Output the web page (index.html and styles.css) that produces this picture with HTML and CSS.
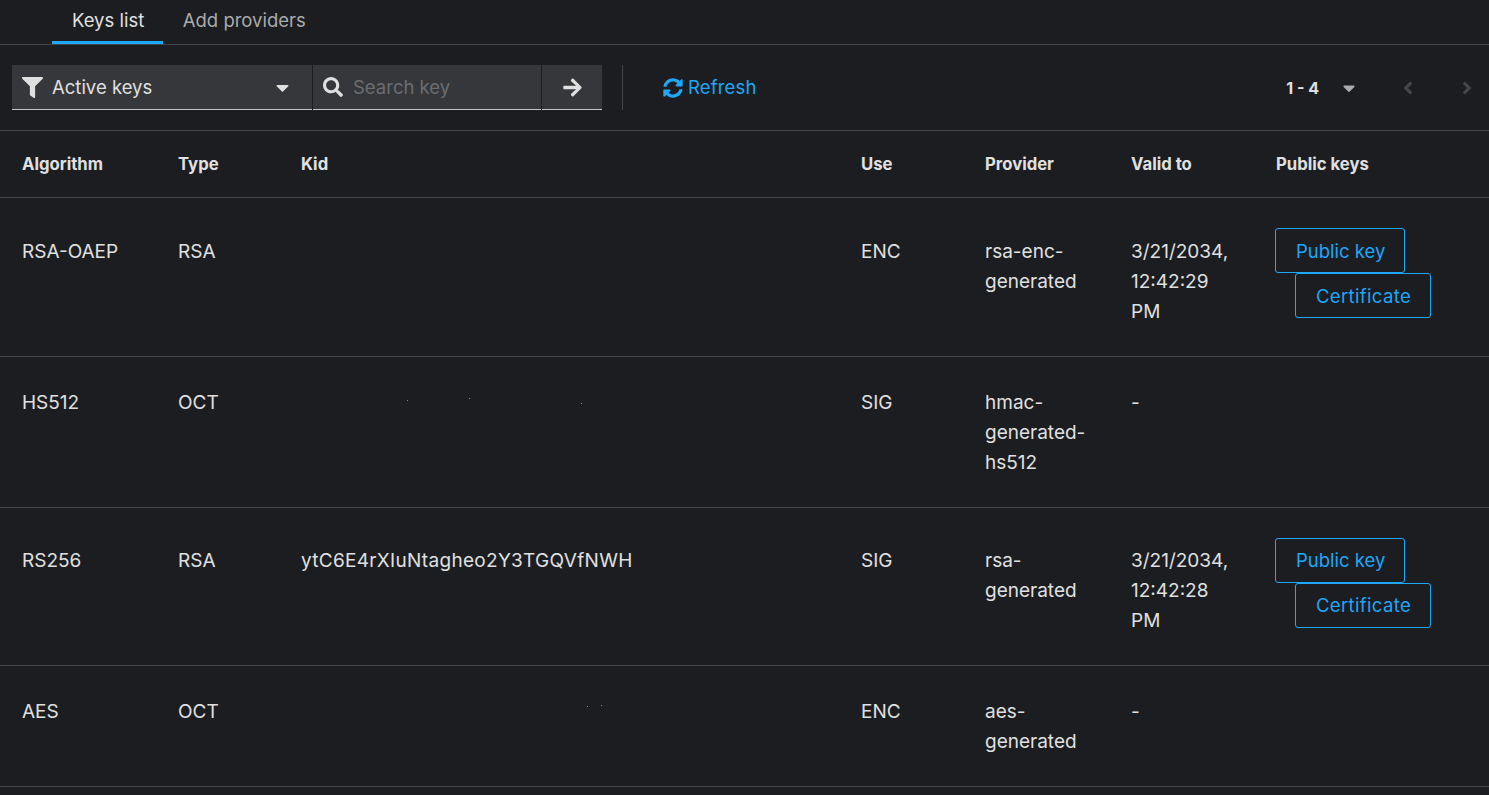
FILE: index.html
```html
<!DOCTYPE html>
<html lang="en">
<head>
    <meta charset="UTF-8">
    <title>Keys</title>
    <link rel="stylesheet" href="styles.css">
</head>
<body>

    <div class="tabs">
        <a class="tab tab-active">Keys list</a>
        <a class="tab">Add providers</a>
    </div>

    <div class="toolbar">
        <div class="filter-select">
            <svg class="icon-filter" viewBox="0 0 512 512"><path d="M487.976 0H24.028C2.71 0-8.047 25.866 7.058 40.971L192 225.941V432c0 7.831 3.821 15.17 10.237 19.662l80 55.98C298.02 518.69 320 507.493 320 487.98V225.941l184.947-184.97C520.021 25.896 509.338 0 487.976 0z"/></svg>
            <span class="filter-label">Active keys</span>
            <svg class="icon-caret" viewBox="0 0 320 512"><path d="M31.3 192h257.3c17.8 0 26.7 21.5 14.1 34.1L174.1 354.8c-7.8 7.8-20.5 7.8-28.3 0L17.2 226.1C4.6 213.5 13.5 192 31.3 192z"/></svg>
        </div>
        <div class="search-box">
            <svg class="icon-search" viewBox="0 0 512 512"><path d="M505 442.7L405.3 343c-4.5-4.5-10.6-7-17-7H372c27.6-35.3 44-79.7 44-128C416 93.1 322.9 0 208 0S0 93.1 0 208s93.1 208 208 208c48.3 0 92.7-16.4 128-44v16.3c0 6.4 2.5 12.5 7 17l99.7 99.7c9.4 9.4 24.6 9.4 33.9 0l28.3-28.3c9.4-9.4 9.4-24.6.1-34zM208 336c-70.7 0-128-57.2-128-128 0-70.7 57.2-128 128-128 70.7 0 128 57.2 128 128 0 70.7-57.2 128-128 128z"/></svg>
            <span class="search-placeholder">Search key</span>
        </div>
        <div class="search-go">
            <svg class="icon-arrow" viewBox="0 0 448 512"><path d="M190.5 66.9l22.2-22.2c9.4-9.4 24.6-9.4 33.9 0L441 239c9.4 9.4 9.4 24.6 0 33.9L246.6 467.3c-9.4 9.4-24.6 9.4-33.9 0l-22.2-22.2c-9.5-9.5-9.3-25 .4-34.3L311.4 296H24c-13.3 0-24-10.7-24-24v-32c0-13.3 10.7-24 24-24h287.4L190.9 101.2c-9.8-9.3-10-24.8-.4-34.3z"/></svg>
        </div>
        <div class="toolbar-divider"></div>
        <a class="refresh">
            <svg class="icon-sync" viewBox="0 0 512 512"><path d="M370.72 133.28C339.458 104.008 298.888 87.962 255.848 88c-77.458.068-144.328 53.178-162.791 126.85-1.344 5.363-6.122 9.15-11.651 9.15H24.103c-7.498 0-13.194-6.807-11.807-14.176C33.933 94.924 134.813 8 256 8c66.448 0 126.791 26.136 171.315 68.685L463.03 40.97C478.149 25.851 504 36.559 504 57.941V192c0 13.255-10.745 24-24 24H345.941c-21.382 0-32.09-25.851-16.971-40.971l41.75-41.749zM32 296h134.059c21.382 0 32.09 25.851 16.971 40.971l-41.75 41.75c31.262 29.273 71.835 45.319 114.876 45.28 77.418-.07 144.315-53.144 162.787-126.849 1.344-5.363 6.122-9.15 11.651-9.15h57.304c7.498 0 13.194 6.807 11.807 14.176C478.067 417.076 377.187 504 256 504c-66.448 0-126.791-26.136-171.315-68.685L48.97 471.03C33.851 486.149 8 475.441 8 454.059V320c0-13.255 10.745-24 24-24z"/></svg>
            <span class="refresh-label">Refresh</span>
        </a>
        <div class="pagination">
            <span class="page-range">1 - 4</span>
            <svg class="icon-page-caret" viewBox="0 0 320 512"><path d="M31.3 192h257.3c17.8 0 26.7 21.5 14.1 34.1L174.1 354.8c-7.8 7.8-20.5 7.8-28.3 0L17.2 226.1C4.6 213.5 13.5 192 31.3 192z"/></svg>
            <svg class="icon-prev" viewBox="0 0 256 512"><path d="M31.7 239l136-136c9.4-9.4 24.6-9.4 33.9 0l22.6 22.6c9.4 9.4 9.4 24.6 0 33.9L127.9 256l96.4 96.4c9.4 9.4 9.4 24.6 0 33.9L201.7 409c-9.4 9.4-24.6 9.4-33.9 0l-136-136c-9.5-9.4-9.5-24.6-.1-34z"/></svg>
            <svg class="icon-next" viewBox="0 0 256 512"><path d="M224.3 273l-136 136c-9.4 9.4-24.6 9.4-33.9 0l-22.6-22.6c-9.4-9.4-9.4-24.6 0-33.9l96.4-96.4-96.4-96.4c-9.4-9.4-9.4-24.6 0-33.9L54.3 103c9.4-9.4 24.6-9.4 33.9 0l136 136c9.5 9.4 9.5 24.6.1 34z"/></svg>
        </div>
    </div>

    <table class="keys-table">
        <colgroup>
            <col class="col-alg">
            <col class="col-type">
            <col class="col-kid">
            <col class="col-use">
            <col class="col-provider">
            <col class="col-valid">
            <col class="col-public">
        </colgroup>
        <thead>
            <tr>
                <th>Algorithm</th>
                <th>Type</th>
                <th>Kid</th>
                <th>Use</th>
                <th>Provider</th>
                <th>Valid to</th>
                <th>Public keys</th>
            </tr>
        </thead>
        <tbody>
            <tr class="row-keys">
                <td>RSA-OAEP</td>
                <td>RSA</td>
                <td></td>
                <td>ENC</td>
                <td>rsa-enc-generated</td>
                <td>3/21/2034, 12:42:29 PM</td>
                <td class="cell-buttons">
                    <div class="key-buttons">
                        <a class="key-btn">Public key</a>
                        <a class="key-btn key-btn-cert">Certificate</a>
                    </div>
                </td>
            </tr>
            <tr>
                <td>HS512</td>
                <td>OCT</td>
                <td class="kid-hidden">
                    <i class="speck speck-a"></i><i class="speck speck-b"></i><i class="speck speck-c"></i>
                </td>
                <td>SIG</td>
                <td>hmac-generated-hs512</td>
                <td>-</td>
                <td></td>
            </tr>
            <tr class="row-keys row-keys-tight">
                <td>RS256</td>
                <td>RSA</td>
                <td class="kid-value">ytC6E4rXIuNtagheo2Y3TGQVfNWH</td>
                <td>SIG</td>
                <td>rsa-generated</td>
                <td>3/21/2034, 12:42:28 PM</td>
                <td class="cell-buttons">
                    <div class="key-buttons">
                        <a class="key-btn">Public key</a>
                        <a class="key-btn key-btn-cert">Certificate</a>
                    </div>
                </td>
            </tr>
            <tr>
                <td>AES</td>
                <td>OCT</td>
                <td class="kid-hidden">
                    <i class="speck speck-d"></i><i class="speck speck-e"></i>
                </td>
                <td>ENC</td>
                <td>aes-generated</td>
                <td>-</td>
                <td></td>
            </tr>
        </tbody>
    </table>

</body>
</html>
```

FILE: styles.css
```css
body {
    margin: 0;
    background-color: #1b1d21;
    color: #e0e0e0;
    font-family: "Inter", "Open Sans", sans-serif;
    font-size: 18.5px;
    line-height: 30px;
}

/* tabs */
.tabs {
    display: flex;
    height: 44px;
    padding-left: 52px;
    border-bottom: 1px solid #444548;
}
.tab {
    padding: 5px 18.5px 0 20px;
    color: #aaabac;
}
.tab-active {
    color: #e0e0e0;
    border-bottom: 3px solid #1fa7f8;
    height: 36px;
}

/* toolbar */
.toolbar {
    display: flex;
    align-items: center;
    height: 85px;
    padding: 0 12px;
    border-bottom: 1px solid #444548;
}
.filter-select,
.search-box,
.search-go {
    display: flex;
    align-items: center;
    height: 44px;
    background: #36373a;
    border-bottom: 1px solid #c7c7c7;
}
.filter-select {
    width: 300px;
    margin-right: 1px;
}
.icon-filter {
    width: 21px;
    height: 21px;
    margin-left: 10px;
    fill: #e0e0e0;
}
.filter-label {
    margin-left: 9px;
    flex: 1;
}
.icon-caret {
    width: 13px;
    height: 21px;
    margin-right: 23px;
    fill: #e0e0e0;
}
.search-box {
    width: 228px;
    margin-right: 1px;
}
.icon-search {
    width: 20px;
    height: 20px;
    margin-left: 10px;
    fill: #e0e0e0;
}
.search-placeholder {
    margin-left: 10px;
    color: #6a6e73;
}
.search-go {
    width: 60px;
    justify-content: center;
}
.icon-arrow {
    width: 19px;
    height: 21px;
    fill: #e0e0e0;
}
.toolbar-divider {
    width: 1px;
    height: 45px;
    margin: 0 40px 0 20px;
    background: #444548;
}
.refresh {
    display: flex;
    align-items: center;
    color: #1fa7f8;
}
.refresh-label {
    margin-bottom: 2px;
    letter-spacing: 0.15px;
}
.icon-sync {
    width: 20px;
    height: 20px;
    margin-right: 5px;
    fill: #1fa7f8;
}
.pagination {
    display: flex;
    align-items: center;
    margin-left: auto;
}
.page-range {
    font-weight: 700;
    font-size: 16px;
}
.icon-page-caret {
    width: 12px;
    height: 20px;
    margin-left: 24px;
    fill: #aaabac;
}
.icon-prev,
.icon-next {
    width: 10px;
    height: 20px;
    fill: #444548;
}
.icon-prev {
    margin-left: 48px;
}
.icon-next {
    margin-left: 49px;
    margin-right: 5px;
}

/* table */
.keys-table {
    width: 100%;
    table-layout: fixed;
    border-collapse: separate;
    border-spacing: 0;
}
.col-alg { width: 178px; }
.col-type { width: 123px; }
.col-kid { width: 560px; }
.col-use { width: 124px; }
.col-provider { width: 146px; }
.col-valid { width: 145px; }
th,
td {
    padding: 31px 36px 29px 0;
    text-align: left;
    vertical-align: top;
    border-bottom: 1px solid #444548;
}
td {
    font-size: 19px;
}
th:first-child,
td:first-child {
    padding-left: 22px;
}
th {
    padding-top: 18px;
    padding-bottom: 18px;
    font-size: 16.7px;
    font-weight: 700;
}
.row-keys td {
    padding-top: 39px;
}
.row-keys .cell-buttons {
    padding-top: 30px;
    padding-bottom: 38px;
}
.row-keys-tight td {
    padding-top: 38px;
}
.row-keys-tight .cell-buttons {
    padding-bottom: 37px;
}
.row-keys-tight .key-btn {
    padding-top: 6px;
    padding-bottom: 7px;
}
.kid-value {
    letter-spacing: 0.3px;
}
.kid-hidden {
    position: relative;
}
.speck {
    position: absolute;
    width: 1px;
    height: 1px;
    background: #8a8b8d;
}
.speck-a { left: 106px; top: 43px; }
.speck-b { left: 168px; top: 41px; }
.speck-c { left: 280px; top: 46px; }
.speck-d { left: 286px; top: 40px; }
.speck-e { left: 300px; top: 39px; }

/* key buttons */
.key-buttons {
    display: flex;
    flex-wrap: wrap;
    margin-left: -1px;
    margin-right: -36px;
    font-size: 18.5px;
}
.key-btn {
    padding: 7px 19px 6px 20px;
    color: #1fa7f8;
    border: 1px solid #1fa7f8;
    border-radius: 3px;
}
.key-btn-cert {
    margin-left: 20px;
    letter-spacing: 0.35px;
}
```
